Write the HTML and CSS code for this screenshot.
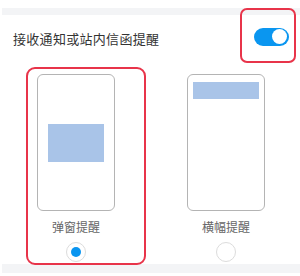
FILE: index.html
```html
<!DOCTYPE html>
<html>
<head>
<meta charset="utf-8">
<link rel="stylesheet" href="styles.css">
</head>
<body>
<div class="page">
  <div class="band top"></div>
  <div class="header">
    <span class="title">接收通知或站内信函提醒</span>
    <span class="toggle"><span class="knob"></span></span>
  </div>
  <div class="options">
    <div class="option">
      <div class="phone center"><div class="popup"></div></div>
      <div class="label">弹窗提醒</div>
      <span class="radio checked"></span>
    </div>
    <div class="option">
      <div class="phone topalign"><div class="banner"></div></div>
      <div class="label">横幅提醒</div>
      <span class="radio"></span>
    </div>
  </div>
  <div class="band bottom"></div>
  <div class="mark mark-toggle"></div>
  <div class="mark mark-option"></div>
</div>
</body>
</html>
```
FILE: styles.css
```css
html, body {
  margin: 0;
  padding: 0;
  background: #fff;
}
.page {
  position: relative;
  width: 300px;
  height: 276px;
  overflow: hidden;
  font-family: "Noto Sans CJK SC", "Noto Sans", sans-serif;
}
.band {
  background: #f3f4f6;
  margin-left: 2px;
}
.band.top {
  margin-top: 8px;
  height: 7px;
}
.band.bottom {
  margin-top: 2px;
  height: 9px;
}
.header {
  height: 45px;
  display: flex;
  align-items: center;
  justify-content: space-between;
  padding: 0 11px 0 13px;
}
.title {
  font-size: 13px;
  letter-spacing: 0.3px;
  color: #333;
  line-height: 1;
  margin-top: 2px;
}
.toggle {
  width: 35px;
  height: 18px;
  border-radius: 9px;
  background: #0a96f0;
  display: flex;
  align-items: center;
  justify-content: flex-end;
  padding-right: 2px;
  box-sizing: border-box;
  margin-top: -2px;
}
.knob {
  width: 15px;
  height: 15px;
  border-radius: 50%;
  background: #fff;
}
.options {
  display: grid;
  grid-template-columns: 150px 150px;
  margin-left: 1px;
  margin-top: 14px;
}
.option {
  display: flex;
  flex-direction: column;
  align-items: center;
}
.phone {
  width: 78px;
  height: 137px;
  box-sizing: border-box;
  border: 1.5px solid #b4b4b4;
  border-radius: 6px;
  display: flex;
  flex-direction: column;
  align-items: center;
}
.phone.center {
  justify-content: center;
}
.phone.topalign {
  padding-top: 7px;
}
.popup {
  width: 56px;
  height: 38px;
  background: #a9c4e8;
}
.banner {
  width: 66px;
  height: 17px;
  background: #a9c4e8;
}
.label {
  margin-top: 9px;
  font-size: 12px;
  line-height: 14px;
  color: #666;
}
.radio {
  margin-top: 8px;
  width: 20px;
  height: 20px;
  box-sizing: border-box;
  border-radius: 50%;
  border: 1px solid #dcdcdc;
  display: flex;
  align-items: center;
  justify-content: center;
}
.radio.checked::after {
  content: "";
  width: 10px;
  height: 10px;
  border-radius: 50%;
  background: #0a95f0;
}
.mark {
  position: absolute;
  border: 2px solid #e8344a;
  box-sizing: border-box;
  border-radius: 7px;
}
.mark-toggle {
  left: 240px;
  top: 8px;
  width: 56px;
  height: 55px;
}
.mark-option {
  left: 26px;
  top: 67px;
  width: 120px;
  height: 198px;
  border-radius: 9px;
}
```
